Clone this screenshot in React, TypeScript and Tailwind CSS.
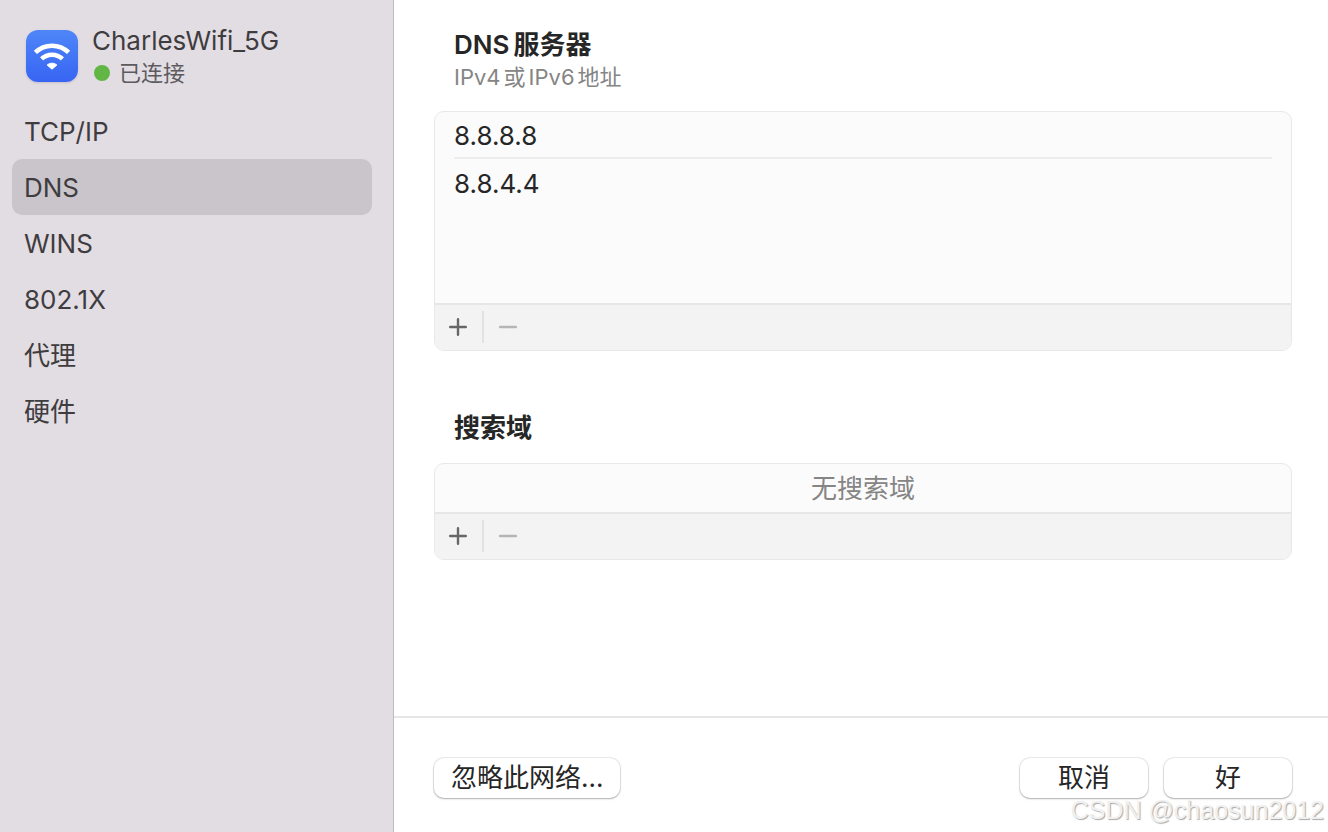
import React, { useState } from 'react';

const sections = ['TCP/IP', 'DNS', 'WINS', '802.1X', '代理', '硬件'];
const dnsServers = ['8.8.8.8', '8.8.4.4'];

function WifiIcon() {
  return (
    <div className="w-[52px] h-[52px] shrink-0 rounded-xl bg-linear-to-b from-[#4f86f8] to-[#3864f3] shadow-sm">
      <svg viewBox="0 0 52 52" className="w-full h-full" fill="none" stroke="#fff" aria-hidden="true">
        <path d="M9.4 22.4a24 24 0 0 1 33.2 0" strokeWidth="4.6" />
        <path d="M15.6 28.9a15 15 0 0 1 20.8 0" strokeWidth="4.6" />
        <path d="M26 39.2l-4.9-4.2a7.4 7.4 0 0 1 9.8 0z" fill="#fff" strokeWidth="1" strokeLinejoin="round" />
      </svg>
    </div>
  );
}

function ListToolbar({ label }: { label: string }) {
  return (
    <div className="flex items-center h-[47px] pb-[2px] border-t-2 border-[#e6e6e6] bg-[#f3f3f3]">
      <button type="button" aria-label={`添加${label}`} className="w-[47px] h-full pr-px flex items-center justify-center text-[#666]">
        <svg viewBox="0 0 20 20" className="w-5 h-5" stroke="currentColor" strokeWidth="2.4" strokeLinecap="round" aria-hidden="true">
          <path d="M2.2 10h15.6M10 2.2v15.6" />
        </svg>
      </button>
      <div className="w-[2px] h-8 bg-[#e2e2e2]" />
      <button type="button" disabled aria-label={`移除${label}`} className="w-12 h-full flex items-center justify-center text-[#b5b5b5]">
        <svg viewBox="0 0 20 20" className="w-5 h-5" stroke="currentColor" strokeWidth="2.6" strokeLinecap="round" aria-hidden="true">
          <path d="M2.2 10h15.6" />
        </svg>
      </button>
    </div>
  );
}

function PushButton({ children, className = 'w-32' }: { children: React.ReactNode; className?: string }) {
  return (
    <button
      type="button"
      className={`h-10 flex items-center justify-center rounded-[10px] bg-white text-[26px] leading-8 text-[#262626] shadow-[0_0_0_1px_rgba(0,0,0,0.08),0_1px_2px_rgba(0,0,0,0.26)] ${className}`}
    >
      {children}
    </button>
  );
}

export default function App() {
  const [active, setActive] = useState('DNS');

  return (
    <div
      lang="zh-CN"
      className="relative flex min-h-screen bg-white text-[#262626] font-[Inter,'Noto_Sans_CJK_SC',sans-serif]"
    >
      <aside className="w-[394px] shrink-0 border-r border-[#bfbbc0] bg-[#e2dde3] pl-3 pr-[21px] pt-6 text-[#3f3c40]">
        <div className="flex items-center gap-[14px] h-[64px] pl-[14px]">
          <WifiIcon />
          <div className="pt-[2px]">
            <h1 className="text-[26px] leading-8">CharlesWifi_5G</h1>
            <p className="flex items-center gap-[9px] text-[22px] leading-8 text-[#5d5a5f]">
              <span className="w-4 h-4 ml-[2px] rounded-full bg-[#62b646]" />
              已连接
            </p>
          </div>
        </div>
        <nav className="mt-[15px] flex flex-col">
          {sections.map((name) => (
            <button
              key={name}
              type="button"
              aria-current={name === active ? 'page' : undefined}
              onClick={() => setActive(name)}
              className={`h-14 px-3 pt-px rounded-[10px] text-left text-[26px] leading-8 ${name === active ? 'bg-[#cac5cb]' : ''}`}
            >
              {name}
            </button>
          ))}
        </nav>
      </aside>

      <div className="flex-1 min-w-0 flex flex-col">
        <main className="flex-1 pl-10 pr-9 pt-[29px]">
          <section>
            <div className="px-5">
              <h2 className="flex gap-1 text-[26px] leading-8 font-semibold">
                <span>DNS</span>
                <span>服务器</span>
              </h2>
              <p className="flex gap-[3px] text-[22px] leading-8 text-[#858585]">
                <span>IPv4</span>
                <span>或</span>
                <span>IPv6</span>
                <span>地址</span>
              </p>
            </div>
            <div className="mt-[18px] rounded-[10px] border border-[#e8e8e8] bg-[#fbfbfb] overflow-hidden">
              <ul className="min-h-[191px] px-[19px] divide-y-2 divide-[#ececec]">
                {dnsServers.map((ip) => (
                  <li key={ip} className="h-[47px] pt-[2px] flex items-center text-[26px] leading-8">
                    {ip}
                  </li>
                ))}
              </ul>
              <ListToolbar label="DNS服务器" />
            </div>
          </section>

          <section className="mt-[61px]">
            <h2 className="px-5 text-[26px] leading-8 font-semibold">搜索域</h2>
            <div className="mt-[19px] rounded-[10px] border border-[#e8e8e8] bg-[#fbfbfb] overflow-hidden">
              <p className="h-12 pt-[2px] flex items-center justify-center text-[26px] leading-8 text-[#858585]">无搜索域</p>
              <ListToolbar label="搜索域" />
            </div>
          </section>
        </main>

        <footer className="flex gap-4 border-t-2 border-[#e6e6e6] pl-10 pr-9 pt-10 pb-[34px]">
          <PushButton className="px-[17px] mr-auto">忽略此网络...</PushButton>
          <PushButton>取消</PushButton>
          <PushButton>好</PushButton>
        </footer>
      </div>

      <div className="absolute right-1 bottom-[6px] pointer-events-none text-[25px] leading-8 text-[#f0f0f0] font-['Liberation_Sans',sans-serif] [text-shadow:1px_1px_1px_#a8a8a8]">
        CSDN @chaosun2012
      </div>
    </div>
  );
}
